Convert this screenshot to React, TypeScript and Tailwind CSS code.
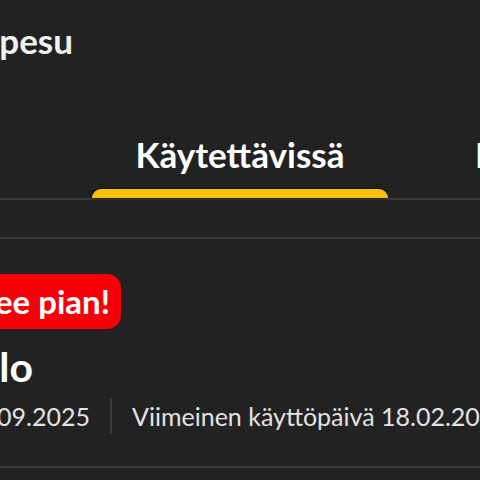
import React from "react";

export default function App() {
  return (
    <div
      className="w-[480px] h-[480px] overflow-hidden bg-[#222222] text-[#f3f3f3]"
      style={{ fontFamily: "Lato, 'Open Sans', sans-serif" }}
    >
      {/* Header */}
      <div className="pt-[20px] flex">
        <div className="w-[73px] flex justify-end shrink-0">
          <span className="whitespace-nowrap text-[35px] leading-[40px] font-bold text-[#f1f1f1]">Auton pesu</span>
        </div>
      </div>

      {/* Tabs */}
      <div className="mt-[74px] flex">
        <div className="ml-[92px] w-[296px] shrink-0 flex flex-col items-center">
          <span className="whitespace-nowrap text-[35px] leading-[41px] font-bold text-white">Käytettävissä</span>
          <div className="mt-[14px] w-full h-[9px] rounded-t-[9px] bg-[#f7c20c] shadow-[0_0_3px_rgba(0,0,0,0.9)]" />
        </div>
        <div className="shrink-0 pl-[87px] flex flex-col">
          <span className="whitespace-nowrap text-[35px] leading-[41px] font-bold text-white">Käytetyt</span>
        </div>
      </div>
      <div className="h-[2px] bg-[#393939]" />
      <div className="mt-[37px] h-[2px] bg-[#393939]" />

      {/* Card */}
      <div className="pt-[35px] flex">
        <div className="w-[121px] flex justify-end shrink-0">
          <span className="whitespace-nowrap bg-[#f50009] rounded-[14px] pl-4 pr-[11px] h-[55px] flex items-center text-[33px] font-bold text-white">
            Vanhenee pian!
          </span>
        </div>
      </div>
      <div className="mt-[14px] flex">
        <div className="w-[33px] flex justify-end shrink-0">
          <span className="whitespace-nowrap text-[41px] leading-[48px] font-bold text-white">Tähtivalo</span>
        </div>
      </div>
      <div className="mt-[8px] flex items-center h-[34px]">
        <div className="w-[90px] flex justify-end shrink-0">
          <span className="whitespace-nowrap text-[25px] leading-[30px] text-[#e2e2e2]">Ostettu 18.09.2025</span>
        </div>
        <div className="ml-[20px] w-[2px] h-[34px] bg-[#3d3d3d] shrink-0" />
        <span className="ml-[20px] whitespace-nowrap text-[25px] leading-[30px] text-[#e2e2e2]">
          Viimeinen käyttöpäivä 18.02.2026
        </span>
      </div>
      <div className="mt-[33px] h-[2px] bg-[#393939]" />
    </div>
  );
}
